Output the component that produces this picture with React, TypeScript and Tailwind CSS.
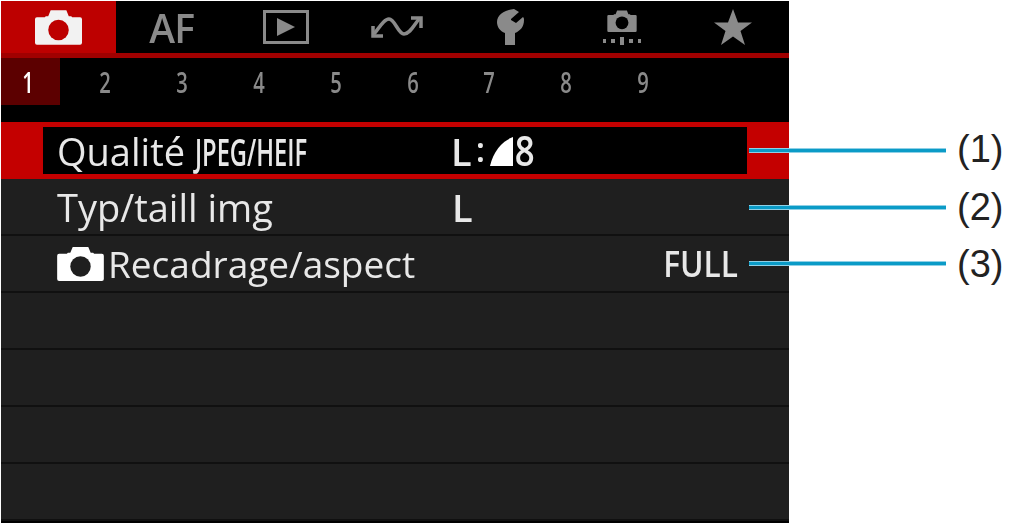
const tabTextColor = "text-[#8a8a8a]";
const numbers = ["1", "2", "3", "4", "5", "6", "7", "8", "9"];

const CameraIcon = ({ className, lens }: { className: string; lens: string }) => (
  <svg viewBox="0 0 48 36" className={className}>
    <path
      d="M2 8h8l1-1h2.500L16 1h16l2.500 6H37l1 1h8a2 2 0 0 1 2 2v24a2 2 0 0 1-2 2H2a2 2 0 0 1-2-2V10a2 2 0 0 1 2-2z"
      fill="currentColor"
    />
    <circle cx="24" cy="21" r="10.500" fill={lens} />
  </svg>
);

const TabBar = () => (
  <div className="flex h-[52px] bg-black">
    <div className="flex w-[115px] items-center justify-center bg-[#bd0000]">
      <CameraIcon className="mr-[1px] h-[36px] w-[47px] text-[#f2f2f2]" lens="#bd0000" />
    </div>
    <div className={`flex flex-1 items-center justify-center pr-[3px] ${tabTextColor}`}>
      <span className="text-[39px] font-semibold leading-none tracking-tight">AF</span>
    </div>
    <div className={`flex flex-1 items-center justify-center ${tabTextColor}`}>
      <svg viewBox="0 0 46 34" className="h-[34px] w-[46px]">
        <rect x="1.500" y="1.500" width="43" height="31" fill="none" stroke="currentColor" strokeWidth="3" />
        <path d="M14 8l18 9-18 9z" fill="currentColor" />
      </svg>
    </div>
    <div className={`flex flex-1 items-center justify-center pr-[2px] ${tabTextColor}`}>
      <svg viewBox="0 0 54 24" className="h-[24px] w-[54px]">
        <path
          d="M4 19C9 13 14 4 19 4c6 0 9 15 15 15 6 0 10-9 15-15"
          fill="none"
          stroke="currentColor"
          strokeWidth="3.500"
        />
        <path d="M3 11v10h10M41 3h10v10" fill="none" stroke="currentColor" strokeWidth="3.500" />
      </svg>
    </div>
    <div className={`flex flex-1 items-center justify-center ${tabTextColor}`}>
      <svg viewBox="0 0 27 36" className="h-[36px] w-[27px]">
        <path
          d="M17 0C7 1 0 6 0 13c0 5 3 9 8 11v12h10V24c5-2 9-6 9-13 0-1 0-2-1-3l-7 6-5-3v-1l8-7z"
          fill="currentColor"
        />
      </svg>
    </div>
    <div className={`flex flex-1 flex-col items-center justify-center gap-[5px] ${tabTextColor}`}>
      <CameraIcon className="h-[22px] w-[32px]" lens="#000000" />
      <svg viewBox="0 0 40 8" className="h-[8px] w-[40px]">
        <path
          d="M1 2h3v4H1zM9 2h4v4H9zM18 0h4v8h-4zM27 2h4v4h-4zM36 2h3v4h-3z"
          fill="currentColor"
        />
      </svg>
    </div>
    <div className={`flex flex-1 items-center justify-center ${tabTextColor}`}>
      <svg viewBox="0 0 38 36" className="h-[36px] w-[38px]">
        <path d="M19 0l5 13.500h14L26.500 22 31 36 19 27.500 7 36l4.500-14L0 13.500h14z" fill="currentColor" />
      </svg>
    </div>
  </div>
);

const NumberRow = () => (
  <div className="h-[64px] bg-black">
    <div className="flex h-[47px]">
      {numbers.map((n, i) => (
        <div
          key={n}
          className={
            i === 0
              ? "mr-[7px] flex w-[59px] items-center justify-center bg-[#5c0000] pr-[4px] text-white"
              : "flex w-[76.800px] items-center justify-center text-[#8a8a8a]"
          }
        >
          <span className="inline-block scale-x-[0.72] text-[28px] font-semibold leading-none">{n}</span>
        </div>
      ))}
    </div>
  </div>
);

const Row = ({ children }: { children?: React.ReactNode }) => (
  <div className="flex h-[57px] items-center border-b-2 border-[#101010] bg-[#1f1f1f] pl-[56px] pr-[51px] text-[38px] leading-none text-[#e8e8e8]">
    {children}
  </div>
);

const App = () => (
  <div className="relative h-[527px] w-[1023px] overflow-hidden bg-white font-['Open_Sans',sans-serif]">
    <div className="ml-px mt-px flex h-[522px] w-[788px] flex-col overflow-hidden bg-black blur-[0.6px]">
      <TabBar />
      <div className="h-[5px] bg-[#a00000]" />
      <NumberRow />
      {/* selected row */}
      <div className="flex h-[57px] bg-[#c40000] py-[5px] pl-[42px] pr-[42px]">
        <div className="flex flex-1 items-center bg-black pl-[14px] text-[38px] leading-none text-[#e8e8e8]">
          <span className="w-[394px] whitespace-nowrap">
            Qualité{" "}
            <span className="inline-block origin-left scale-x-[0.64] text-[37px] font-semibold">JPEG/HEIF</span>
          </span>
          <span className="flex items-center text-[38px] font-semibold">
            L
            <span className="mb-[3px] ml-[4px] mr-[5px] text-[34px]">:</span>
            <svg viewBox="0 0 23 29" className="mt-[2px] h-[29px] w-[23px] text-white">
              <path d="M23 0V29H0C3 15 12 4 23 0z" fill="currentColor" />
            </svg>
            <span className="inline-block scale-x-[0.85] text-[41px]">8</span>
          </span>
        </div>
      </div>
      <Row>
        <span className="w-[395px]">Typ/taill img</span>
        <span className="font-semibold">L</span>
      </Row>
      <Row>
        <CameraIcon className="h-[35px] w-[47px] text-white" lens="#1f1f1f" />
        <span className="ml-[4px] flex-1 text-[37px]">Recadrage/aspect</span>
        <span className="inline-block origin-right scale-x-[0.88] text-[36px] font-semibold">FULL</span>
      </Row>
      <Row />
      <Row />
      <Row />
      <Row />
    </div>

    {/* callouts */}
    {[
      { top: "top-[148px]", label: "(1)", labelTop: "top-[130px]" },
      { top: "top-[205px]", label: "(2)", labelTop: "top-[188px]" },
      { top: "top-[261px]", label: "(3)", labelTop: "top-[245px]" },
    ].map((c) => (
      <div key={c.label}>
        <div className={`absolute left-[749px] h-[5px] w-[197px] border-y border-[#8fd0e6] bg-[#0b9bc7] blur-[0.4px] ${c.top}`} />
        <span
          className={`absolute left-[957px] font-['Liberation_Sans',sans-serif] text-[38px] leading-[38px] text-[#222] ${c.labelTop}`}
        >
          {c.label}
        </span>
      </div>
    ))}
  </div>
);

export default App;
